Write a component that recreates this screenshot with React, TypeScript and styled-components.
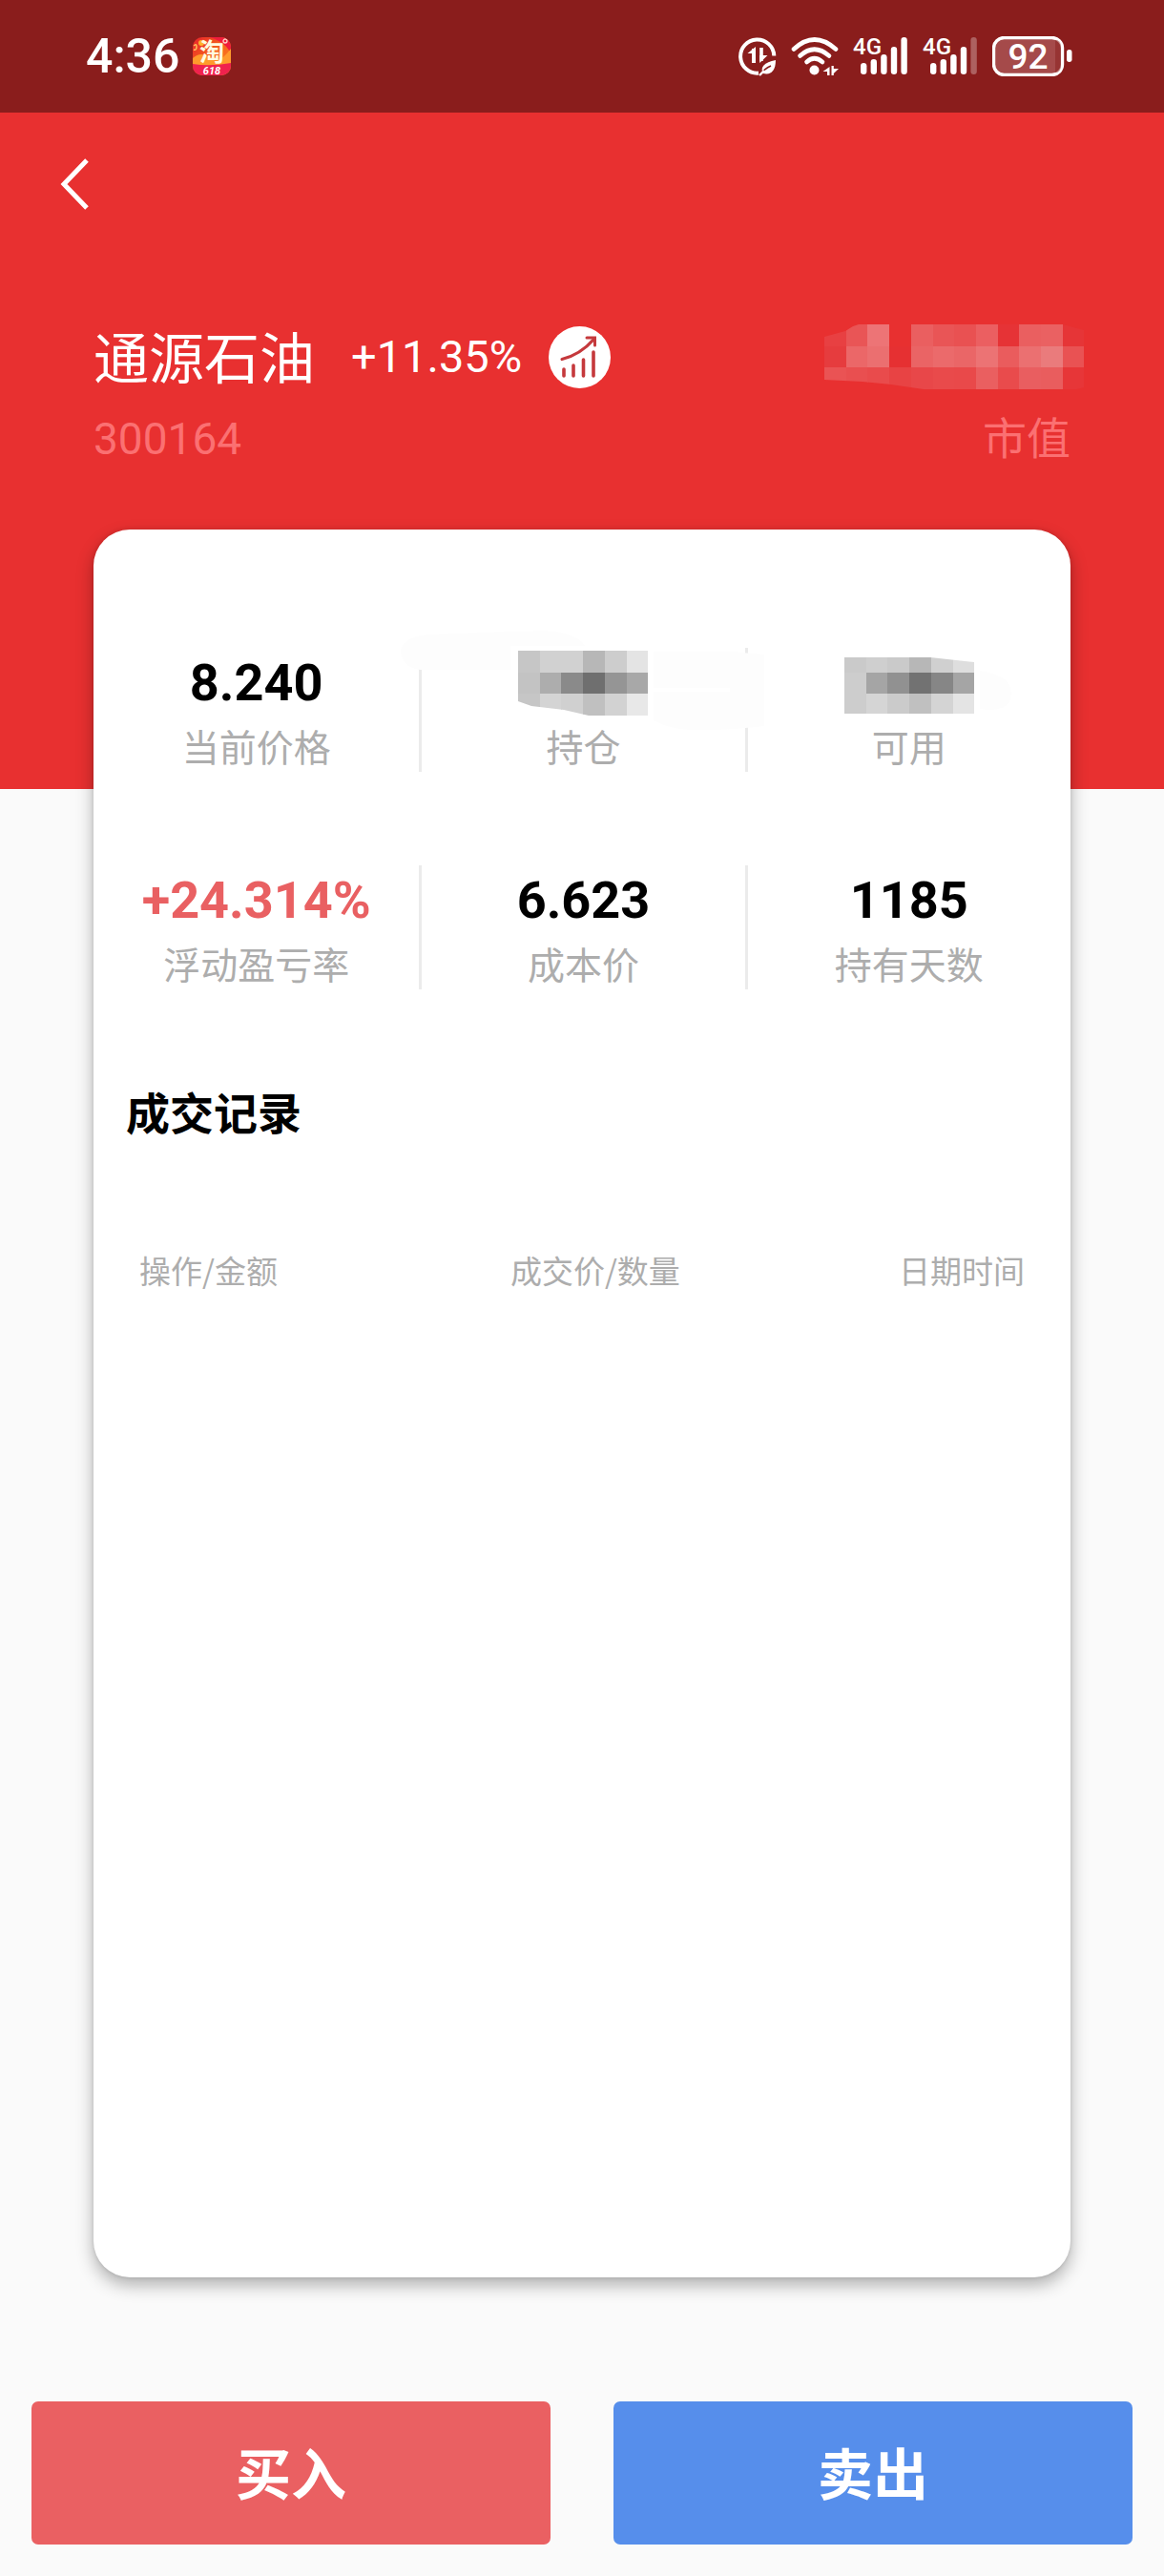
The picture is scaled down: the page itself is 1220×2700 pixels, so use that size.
import React from 'react';
import styled, { createGlobalStyle } from 'styled-components';

const cjk = `'Noto Sans CJK SC', sans-serif`;

const GlobalStyle = createGlobalStyle`
  *, *::before, *::after { box-sizing: border-box; }
  body {
    margin: 0;
    background: #fafafa;
    font-family: Roboto, 'Noto Sans CJK SC', sans-serif;
    color: #000;
  }
  svg { display: block; flex: none; }
`;

const Page = styled.div`
  display: flex;
  flex-direction: column;
  min-height: 100vh;
`;

const StatusBar = styled.div`
  display: flex;
  align-items: center;
  justify-content: space-between;
  height: 118px;
  padding: 0 96px 0 90px;
  background: #8a1d1c;
  color: #fff;
`;

const StatusGroup = styled.div<{ $gap: number }>`
  display: flex;
  align-items: center;
  gap: ${(p) => p.$gap}px;
`;

const Clock = styled.time`
  font-size: 50px;
  font-weight: 500;
  line-height: 64px;
`;

const Hero = styled.header`
  padding: 0 98px 337px;
  background: #e83030;
  color: #fff;
`;

const NavBar = styled.nav`
  display: flex;
  align-items: center;
  height: 150px;
  margin: 0 -50px 70px;
`;

const BackButton = styled.button`
  display: flex;
  align-items: center;
  justify-content: center;
  width: 60px;
  height: 80px;
  padding: 0;
  border: 0;
  background: none;
`;

const HeroRow = styled.div<{ $height: number }>`
  display: flex;
  align-items: center;
  justify-content: space-between;
  height: ${(p) => p.$height}px;
`;

const Identity = styled.div`
  display: flex;
  align-items: center;
`;

const StockName = styled.h1`
  margin: 0 38px 0 0;
  padding-bottom: 5px;
  font-family: ${cjk};
  font-size: 58px;
  font-weight: 400;
  line-height: 72px;
`;

const Change = styled.span`
  margin-right: 28px;
  font-size: 47px;
  line-height: 72px;
`;

const ChartButton = styled.button`
  padding: 0;
  border: 0;
  border-radius: 50%;
  background: none;
`;

const Redacted = styled.span`
  display: block;
  margin-right: -14px;
`;

const Muted = styled.span`
  margin-top: 20px;
  font-size: 46px;
  line-height: 60px;
  color: #fb7072;
`;

const Card = styled.main`
  flex: 1;
  margin: -272px 98px 130px;
  padding-top: 124px;
  border-radius: 38px;
  background: #fff;
  box-shadow: 0 8px 18px rgba(0, 0, 0, 0.3), 0 0 4px rgba(0, 0, 0, 0.12);
`;

const Stats = styled.dl`
  position: relative;
  display: grid;
  grid-template-columns: repeat(3, 1fr);
  row-gap: 98px;
  margin: 0;
`;

const Stat = styled.div`
  display: flex;
  flex-direction: column-reverse;
  justify-content: flex-end;
  align-items: center;
  gap: 8px;
  height: 130px;
  padding-top: 5px;
  border-left: 3px solid #ebebeb;

  &:nth-child(3n + 1) {
    border-left: 0;
  }
`;

const StatLabel = styled.dt`
  font-family: ${cjk};
  font-size: 39px;
  line-height: 50px;
  color: #adadad;
`;

const StatValue = styled.dd<{ $rise?: boolean }>`
  display: flex;
  align-items: center;
  height: 64px;
  margin: 0;
  font-size: 54px;
  font-weight: 700;
  line-height: 64px;
  color: ${(p) => (p.$rise ? '#e96062' : '#000')};
`;

const Smudge = styled.svg`
  position: absolute;
  top: -20px;
  left: 31%;
  width: 67%;
  height: 112px;
  pointer-events: none;
`;

const SectionTitle = styled.h2`
  margin: 95px 34px 0;
  font-family: ${cjk};
  font-size: 46px;
  font-weight: 700;
  line-height: 64px;
`;

const Records = styled.table`
  width: calc(100% - 96px);
  margin: 113px 48px 0;
  border-collapse: collapse;
  table-layout: fixed;
`;

const HeadCell = styled.th<{ $width: number; $align: string }>`
  width: ${(p) => p.$width}%;
  padding: 0;
  text-align: ${(p) => p.$align};
  font-family: ${cjk};
  font-size: 33px;
  font-weight: 400;
  line-height: 44px;
  color: #adadad;
`;

const Actions = styled.footer`
  display: grid;
  grid-template-columns: 1fr 1fr;
  gap: 66px;
  padding: 0 33px 33px;
`;

const ActionButton = styled.button<{ $color: string }>`
  height: 150px;
  padding: 0 0 4px;
  border: 0;
  border-radius: 7px;
  background: ${(p) => p.$color};
  color: #fff;
  font-family: ${cjk};
  font-size: 58px;
  font-weight: 700;
  line-height: 72px;
`;

const TaobaoIcon = () => (
  <svg width="40" height="56" viewBox="0 -8 40 56" role="img" aria-label="淘 618">
    <defs>
      <linearGradient id="tb" x1="0" y1="0" x2="1" y2="1">
        <stop offset="0" stopColor="#e8202c" />
        <stop offset="0.45" stopColor="#f4601c" />
        <stop offset="1" stopColor="#ff8a20" />
      </linearGradient>
      <clipPath id="tbClip"><rect width="40" height="40" rx="10" /></clipPath>
    </defs>
    <g clipPath="url(#tbClip)">
      <rect width="40" height="40" fill="url(#tb)" />
      <path d="M40 0H18Q36 6 40 18Z" fill="#f01c3c" />
      <path d="M0 22Q9 14 18 22T40 12V30H0Z" fill="#ff9a2c" />
      <circle cx="9" cy="6" r="3" fill="#ffb32e" />
      <path d="M1 9Q4 6 4 10T1 13" fill="none" stroke="#ffc05a" strokeWidth="1.5" />
      <circle cx="34" cy="4" r="2" fill="none" stroke="#ffd0c0" strokeWidth="1.3" />
      <path d="M0 28Q18 31 40 27V40H0Z" fill="#f0224e" />
    </g>
    <text x="20" y="25" textAnchor="middle" fontSize="26" fontWeight="700" fill="#fffbe0">淘</text>
    <text x="20" y="39" textAnchor="middle" fontSize="11" fontWeight="700" fontStyle="italic" fill="#fff">618</text>
  </svg>
);

const EcoDataIcon = () => (
  <svg width="40" height="42" viewBox="0 0 40 42" fill="none" stroke="#fff">
    <path d="M37.3 20.5A17.6 17.6 0 1 0 21 38.6" strokeWidth="4" />
    <path d="M16 13V28" strokeWidth="4" />
    <path d="M18 11V18H9.5Z" fill="#fff" stroke="none" />
    <path d="M24 12V26" strokeWidth="3.6" />
    <path d="M22.2 28V20H30.5Z" fill="#fff" stroke="none" />
    <path d="M39 25C39 36 34 41 26 39C22 33 27 27 39 25Z" fill="#fff" stroke="none" />
    <path d="M22 41Q27 34 34 31" stroke="#8a1d1c" strokeWidth="1.6" />
    <path d="M22 41L27 36" strokeWidth="2.4" />
  </svg>
);

const WifiIcon = () => (
  <svg width="50" height="42" viewBox="0 0 50 42" fill="none" stroke="#fff" strokeWidth="4.6" strokeLinecap="round">
    <path d="M3 13.5Q24.5 -6.5 47 13.5" />
    <path d="M9.5 20.5Q24.5 7 40 20.5" />
    <path d="M16.5 27Q24.5 19.5 33 27" />
    <circle cx="24.5" cy="35.5" r="5" fill="#fff" stroke="none" />
    <g fill="#fff" stroke="none">
      <path d="M40.5 32V41H38V37H33.5Z" />
      <path d="M42.5 31V41H44.8V39L50 34H44.8V31Z" />
    </g>
  </svg>
);

const SignalIcon = ({ weak = false }: { weak?: boolean }) => (
  <svg width="58" height="58" viewBox="0 -8 58 58" fill="#fff">
    <text x="0" y="19" fontSize="24" fontWeight="500">4G</text>
    {[28, 24, 19, 11, 1].map((top, i) => (
      <rect
        key={top}
        x={8 + i * 10.6}
        y={top}
        width="6.4"
        height={40 - top}
        rx="3.2"
        opacity={weak && i === 4 ? 0.3 : 1}
      />
    ))}
  </svg>
);

const BatteryIcon = () => (
  <svg width="84" height="42" viewBox="0 0 84 42" role="img" aria-label="92">
    <rect x="1.5" y="1.5" width="72" height="39" rx="11" fill="#a54a4a" stroke="#fff" strokeWidth="3.4" />
    <path d="M68 4H66V38H68Q72 36 72 31V11Q72 6 68 4Z" fill="#8a1d1c" opacity="0.5" />
    <rect x="78" y="14" width="5.5" height="13" rx="2.7" fill="#fff" />
    <text x="37.5" y="34" textAnchor="middle" fontSize="37" fontWeight="500" fill="#fff">92</text>
  </svg>
);

const BackIcon = () => (
  <svg width="32" height="56" viewBox="0 0 32 56" fill="none" stroke="#fff" strokeWidth="5">
    <path d="M29 3L5 28L29 53" />
  </svg>
);

const TrendIcon = () => (
  <svg width="65" height="65" viewBox="0 0 65 65" fill="none" stroke="#c5393c" strokeLinecap="round">
    <circle cx="32.5" cy="32.5" r="32.5" fill="#fff" stroke="none" />
    <path d="M14 34.5Q33 30 48 13" strokeWidth="3.2" />
    <path d="M40 12H48.5V20" strokeWidth="3" />
    <path d="M16 45V52M26 41V52M36.5 35V52M47 27V52" strokeWidth="3.6" />
  </svg>
);

interface MosaicProps {
  id: string;
  rows: string[][];
  cell: number;
  outline: string;
}

const Mosaic = ({ id, rows, cell, outline }: MosaicProps) => {
  const width = Math.round(rows[0].length * cell);
  return (
    <svg width={width} height="68" viewBox={`0 0 ${width} 68`} shapeRendering="crispEdges" aria-hidden="true">
      <clipPath id={id}><polygon points={outline} /></clipPath>
      <g clipPath={`url(#${id})`}>
        {rows.map((row, r) =>
          row.map((fill, c) => (
            <rect key={`${r}-${c}`} x={c * cell} y={r * cell} width={cell + 0.5} height={cell + 0.5} fill={fill} />
          )),
        )}
      </g>
    </svg>
  );
};

const marketValue = [
  ['#e84042', '#e95556', '#ed7476', '#e83030', '#ea5f60', '#e95556', '#e95152', '#eb5f61', '#e63336', '#ea5f60', '#ea6162', '#e63537'],
  ['#e63c3e', '#eb6768', '#eb6f70', '#e63032', '#ea6465', '#eb6a6b', '#ea6667', '#ec7374', '#ea5c5d', '#eb7071', '#ea7b7c', '#e95253'],
  ['#ea5354', '#e94f50', '#e94b4c', '#e84344', '#e84749', '#e94a4b', '#e9494a', '#ea5f60', '#e94b4c', '#e95e60', '#e95d5e', '#e73638'],
];

const holding = [
  ['#c6c6c6', '#d1d1d1', '#d1d1d1', '#b7b7b7', '#cdcdcd', '#e4e4e4'],
  ['#c3c3c3', '#adadad', '#8a8a8a', '#6f6f6f', '#959595', '#a8a8a8'],
  ['#c6c6c6', '#d4d4d4', '#d0d0d0', '#c0c0c0', '#d2d2d2', '#e8e8e8'],
];

const available = [
  ['#cacaca', '#cfcfcf', '#cacaca', '#b7b7b7', '#d0d0d0', '#dedede'],
  ['#cdcdcd', '#a5a5a5', '#919191', '#727272', '#868686', '#a5a5a5'],
  ['#cdcdcd', '#d5d5d5', '#cbcbcb', '#c0c0c0', '#d4d4d4', '#e4e4e4'],
];

interface StatItem {
  label: string;
  value: React.ReactNode;
  rise?: boolean;
}

const stats: StatItem[] = [
  { label: '当前价格', value: '8.240' },
  {
    label: '持仓',
    value: <Mosaic id="holding" rows={holding} cell={22.7} outline="0,0 136,0 136,68 74,68 48,62 14,58 0,53" />,
  },
  {
    label: '可用',
    value: <Mosaic id="available" rows={available} cell={22.7} outline="0,7 90,7 136,12 136,66 0,66" />,
  },
  { label: '浮动盈亏率', value: '+24.314%', rise: true },
  { label: '成本价', value: '6.623' },
  { label: '持有天数', value: '1185' },
];

export default function App() {
  return (
    <Page>
      <GlobalStyle />
      <StatusBar>
        <StatusGroup $gap={14}>
          <Clock>4:36</Clock>
          <TaobaoIcon />
        </StatusGroup>
        <StatusGroup $gap={15}>
          <EcoDataIcon />
          <WifiIcon />
          <SignalIcon />
          <SignalIcon weak />
          <BatteryIcon />
        </StatusGroup>
      </StatusBar>

      <Hero>
        <NavBar>
          <BackButton type="button" aria-label="返回">
            <BackIcon />
          </BackButton>
        </NavBar>
        <HeroRow $height={72}>
          <Identity>
            <StockName>通源石油</StockName>
            <Change>+11.35%</Change>
            <ChartButton type="button" aria-label="走势">
              <TrendIcon />
            </ChartButton>
          </Identity>
          <Redacted>
            <Mosaic
              id="market"
              rows={marketValue}
              cell={22.7}
              outline="0,13 22,7 30,2 36,0 250,0 272,6 272,66 264,68 104,68 70,63 40,60 0,58"
            />
          </Redacted>
        </HeroRow>
        <HeroRow $height={80}>
          <Muted>300164</Muted>
          <Muted>市值</Muted>
        </HeroRow>
      </Hero>

      <Card>
        <Stats>
          {stats.map((s) => (
            <Stat key={s.label}>
              <StatLabel>{s.label}</StatLabel>
              <StatValue $rise={s.rise}>{s.value}</StatValue>
            </Stat>
          ))}
          <Smudge viewBox="0 0 686 112" preserveAspectRatio="none" aria-hidden="true">
            <path d="M5 22Q9 8 35 6L155 2Q190 4 198 18H120V43H25Q5 40 5 22Z" fill="#fdfdfd" />
            <path d="M270 24L355 24Q370 26 386 27V102Q350 106 330 106Q290 108 270 96V66H350V62H270Z" fill="#fdfdfd" />
            <path d="M612 44Q650 50 644 74Q638 88 612 84Z" fill="#fdfdfd" />
          </Smudge>
        </Stats>

        <SectionTitle>成交记录</SectionTitle>
        <Records>
          <thead>
            <tr>
              <HeadCell $width={36} $align="left" scope="col">操作/金额</HeadCell>
              <HeadCell $width={31} $align="center" scope="col">成交价/数量</HeadCell>
              <HeadCell $width={33} $align="right" scope="col">日期时间</HeadCell>
            </tr>
          </thead>
        </Records>
      </Card>

      <Actions>
        <ActionButton type="button" $color="#ea6062">买入</ActionButton>
        <ActionButton type="button" $color="#568eeb">卖出</ActionButton>
      </Actions>
    </Page>
  );
}
